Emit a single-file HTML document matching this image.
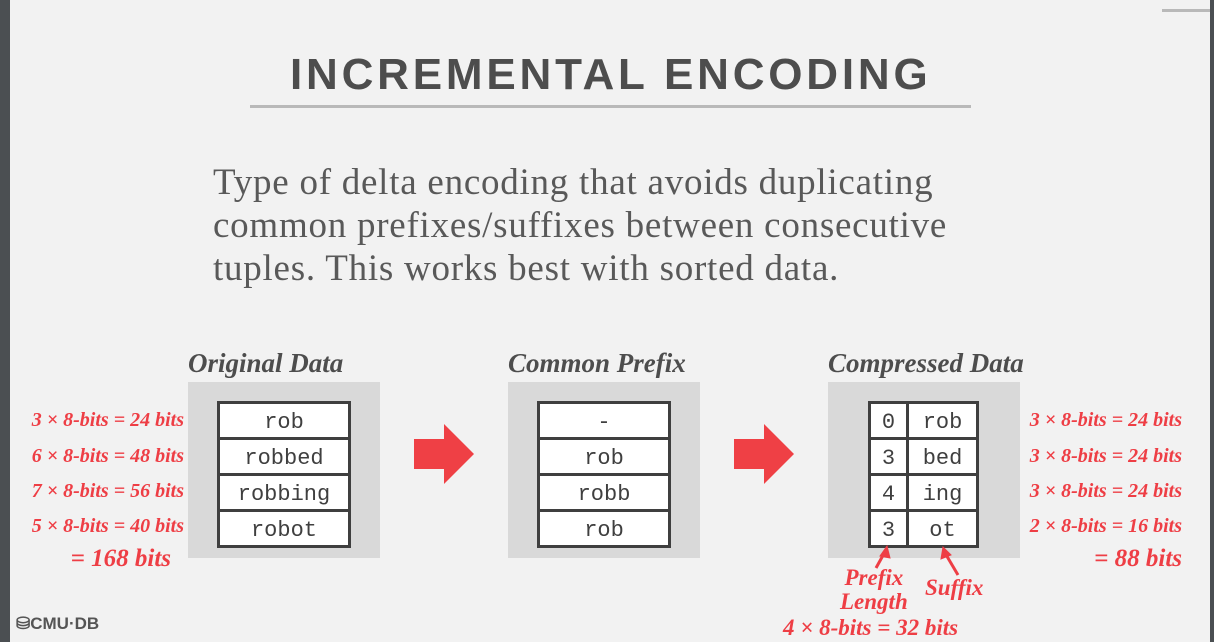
<!DOCTYPE html>
<html><head><meta charset="utf-8"><style>
*{margin:0;padding:0;box-sizing:border-box}
body{width:1214px;height:642px;background:#f2f2f2;position:relative;overflow:hidden;font-family:"Liberation Serif",serif}
.a{position:absolute;white-space:nowrap}
.title{left:290px;top:50px;font:bold 44px "Liberation Sans",sans-serif;color:#4d4d4d;letter-spacing:3.8px}
.rule{left:250px;top:105px;width:721px;height:3px;background:#b9b9b9}
.body{left:213px;font-size:37px;color:#595959;letter-spacing:0.75px}
.lab{font:italic bold 27px "Liberation Serif",serif;color:#4d4d4d}
.bg{background:#d9d9d9;width:192px;height:176px;top:382px}
table{position:absolute;border-collapse:collapse;font:22px "Liberation Mono",monospace;color:#3f3f3f;background:#fff}
td{border:3px solid #3f3f3f;height:36px;text-align:center;padding:3px 0 0;line-height:27px}
.r{font:italic bold 20px "Liberation Serif",serif;color:#ee3e45;text-align:right}
.big{font:italic bold 25px "Liberation Serif",serif;color:#ee3e45}
</style></head><body>
<div class="a" style="left:0;top:0;width:10px;height:642px;background:#4b4f52"></div>
<div class="a" style="left:1210px;top:0;width:4px;height:642px;background:#4b4f52"></div>
<div class="a" style="left:1162px;top:9px;width:48px;height:3px;background:#b9b9b9"></div>
<div class="a title">INCREMENTAL ENCODING</div>
<div class="a rule"></div>
<div class="a body" style="top:161px">Type of delta encoding that avoids duplicating</div>
<div class="a body" style="top:204px">common prefixes/suffixes between consecutive</div>
<div class="a body" style="top:247px">tuples. This works best with sorted data.</div>

<div class="a lab" style="left:188px;top:348px">Original Data</div>
<div class="a lab" style="left:508px;top:348px">Common Prefix</div>
<div class="a lab" style="left:828px;top:348px">Compressed Data</div>

<div class="a bg" style="left:188px"></div>
<div class="a bg" style="left:508px"></div>
<div class="a bg" style="left:828px"></div>

<table style="left:217px;top:401px;width:134px"><tr><td>rob</td></tr><tr><td>robbed</td></tr><tr><td>robbing</td></tr><tr><td>robot</td></tr></table>
<table style="left:537px;top:401px;width:134px"><tr><td>-</td></tr><tr><td>rob</td></tr><tr><td>robb</td></tr><tr><td>rob</td></tr></table>
<table style="left:868px;top:401px;width:111px"><tr><td style="width:38px">0</td><td>rob</td></tr><tr><td>3</td><td>bed</td></tr><tr><td>4</td><td>ing</td></tr><tr><td>3</td><td>ot</td></tr></table>

<svg class="a" style="left:0;top:0" width="1214" height="642">
<polygon points="414,439 444,439 444,424 474,454 444,484 444,469 414,469" fill="#ef4045"/>
<polygon points="734,439 764,439 764,424 794,454 764,484 764,469 734,469" fill="#ef4045"/>
<g stroke="#ee3e45" stroke-width="3" fill="#ee3e45">
<line x1="876" y1="568" x2="886" y2="550"/><polygon points="887,546 880,556 890,558" stroke-width="1"/>
<line x1="958" y1="575" x2="945" y2="553"/><polygon points="943,547 941,559 951,555" stroke-width="1"/>
</g>
</svg>

<div class="a r" style="right:1030px;top:409px">3 × 8-bits = 24 bits</div>
<div class="a r" style="right:1030px;top:445px">6 × 8-bits = 48 bits</div>
<div class="a r" style="right:1030px;top:480px">7 × 8-bits = 56 bits</div>
<div class="a r" style="right:1030px;top:515px">5 × 8-bits = 40 bits</div>
<div class="a big" style="right:1043px;top:545px">= 168 bits</div>

<div class="a r" style="right:32px;top:409px">3 × 8-bits = 24 bits</div>
<div class="a r" style="right:32px;top:445px">3 × 8-bits = 24 bits</div>
<div class="a r" style="right:32px;top:480px">3 × 8-bits = 24 bits</div>
<div class="a r" style="right:32px;top:515px">2 × 8-bits = 16 bits</div>
<div class="a big" style="right:32px;top:545px">= 88 bits</div>

<div class="a big" style="left:840px;top:566px;font-size:23px;line-height:24px;text-align:center">Prefix<br>Length</div>
<div class="a big" style="left:925px;top:575px;font-size:23px">Suffix</div>
<div class="a r" style="left:783px;top:615px;font-size:23px">4 × 8-bits = 32 bits</div>

<div class="a" style="left:16px;top:614px;font:bold 17px 'Liberation Sans',sans-serif;color:#555">⛁CMU·DB</div>
</body></html>
